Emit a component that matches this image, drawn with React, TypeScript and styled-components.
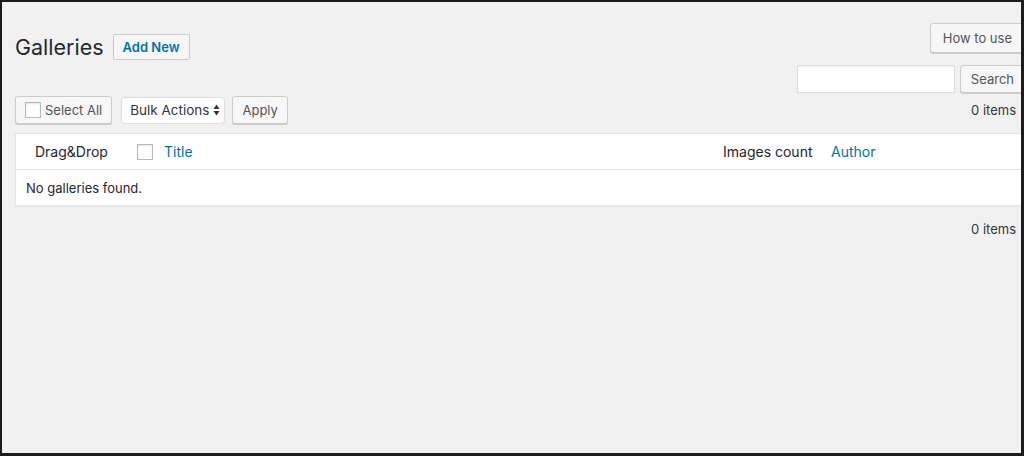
import styled, { createGlobalStyle } from 'styled-components'

const GlobalStyle = createGlobalStyle`
  html, body {
    margin: 0;
    padding: 0;
    background: #f1f1f1;
  }
  * {
    box-sizing: border-box;
  }
`

export default function App() {
  return (
    <>
      <GlobalStyle />
      <Frame>
        <Wrap>
          <Header>
            <TitleRow>
              <PageTitle>Galleries</PageTitle>
              <AddNew>Add New</AddNew>
            </TitleRow>
            <HeaderSide>
              <Button $height={30} $pad={12}>How to use</Button>
              <SearchBox>
                <SearchInput type="text" />
                <Button $height={28} $pad={10}>Search</Button>
              </SearchBox>
            </HeaderSide>
          </Header>

          <Tablenav>
            <Actions>
              <Button $height={28} $pad={9}>
                <Check />
                Select All
              </Button>
              <BulkSelect>
                Bulk Actions
                <svg width="7" height="12" viewBox="0 0 7 12">
                  <path d="M3.5 0.5 L6.5 5 L0.5 5 Z" fill="#333" />
                  <path d="M0.5 7 L6.5 7 L3.5 11.5 Z" fill="#333" />
                </svg>
              </BulkSelect>
              <ApplyButton $height={28} $pad={9}>Apply</ApplyButton>
            </Actions>
            <Count>0 items</Count>
          </Tablenav>

          <Table>
            <HeadRow>
              <DragCol>Drag&amp;Drop</DragCol>
              <Check />
              <TitleCol>Title</TitleCol>
              <CountCol>Images count</CountCol>
              <AuthorCol>Author</AuthorCol>
            </HeadRow>
            <BodyRow>No galleries found.</BodyRow>
          </Table>

          <BottomNav>
            <Count>0 items</Count>
          </BottomNav>
        </Wrap>
      </Frame>
    </>
  )
}

const Frame = styled.div`
  width: 1024px;
  height: 456px;
  border-style: solid;
  border-color: #1c1c1c;
  border-width: 2px 3px 3px 2px;
  background: #f1f1f1;
  overflow: hidden;
  font-family: Inter, 'Liberation Sans', sans-serif;
  font-size: 13px;
  color: #23282d;
`

const Wrap = styled.div`
  width: 1023px;
  padding-left: 13px;
`

const Header = styled.div`
  display: flex;
  justify-content: space-between;
  align-items: flex-start;
`

const TitleRow = styled.div`
  display: flex;
  align-items: center;
  gap: 9px;
  margin-top: 32px;
`

const PageTitle = styled.h1`
  margin: 0;
  font-size: 21.5px;
  font-weight: 400;
  line-height: 26px;
  color: #23282d;
`

const AddNew = styled.button`
  height: 26px;
  padding: 0 9px;
  border: 1px solid #ccc;
  border-radius: 2px;
  background: #f7f7f7;
  color: #0073aa;
  font-family: inherit;
  font-size: 13px;
  font-weight: 600;
`

const HeaderSide = styled.div`
  display: flex;
  flex-direction: column;
  align-items: flex-end;
  gap: 12px;
  padding-top: 21px;
`

const Button = styled.button<{ $height: number; $pad: number }>`
  display: inline-flex;
  align-items: center;
  gap: 4px;
  height: ${p => p.$height}px;
  padding: 0 ${p => p.$pad}px;
  border: 1px solid #ccc;
  border-radius: 3px;
  background: #f7f7f7;
  box-shadow: 0 1px 0 #ccc;
  color: #555;
  font-family: inherit;
  font-size: 13px;
  white-space: nowrap;
`

const ApplyButton = styled(Button)`
  margin-left: -2px;
`

const SearchBox = styled.div`
  display: flex;
  gap: 5px;
`

const SearchInput = styled.input`
  width: 158px;
  height: 28px;
  border: 1px solid #ddd;
  background: #fff;
  box-shadow: inset 0 1px 2px rgba(0, 0, 0, 0.07);
`

const Tablenav = styled.div`
  display: flex;
  justify-content: space-between;
  align-items: center;
  margin-top: 3px;
`

const Actions = styled.div`
  display: flex;
  gap: 9px;
  align-items: center;
`

const Check = styled.span`
  display: inline-block;
  width: 16px;
  height: 16px;
  border: 1px solid #b4b9be;
  background: #fff;
  box-shadow: inset 0 1px 2px rgba(0, 0, 0, 0.1);
`

const BulkSelect = styled.div`
  display: flex;
  align-items: center;
  gap: 4px;
  height: 27px;
  padding: 0 4px 0 8px;
  border: 1px solid #ddd;
  border-radius: 4px;
  background: #fff;
  color: #32373c;
  font-size: 13.5px;
`

const Count = styled.span`
  margin-right: 9px;
  color: #32373c;
`

const Table = styled.div`
  margin-top: 9px;
  background: #fff;
  border: 1px solid #e5e5e5;
  box-shadow: 0 1px 1px rgba(0, 0, 0, 0.04);
`

const HeadRow = styled.div`
  display: flex;
  align-items: center;
  height: 36px;
  border-bottom: 1px solid #e1e1e1;
  font-size: 14px;
`

const DragCol = styled.span`
  width: 121px;
  padding-left: 19px;
`

const TitleCol = styled.span`
  flex: 1;
  padding-left: 11px;
  color: #0073aa;
`

const CountCol = styled.span`
  width: 108px;
`

const AuthorCol = styled.span`
  width: 193px;
  color: #0073aa;
`

const BodyRow = styled.div`
  display: flex;
  align-items: center;
  height: 35px;
  padding-left: 10px;
`

const BottomNav = styled.div`
  display: flex;
  justify-content: flex-end;
  margin-top: 15px;
`
